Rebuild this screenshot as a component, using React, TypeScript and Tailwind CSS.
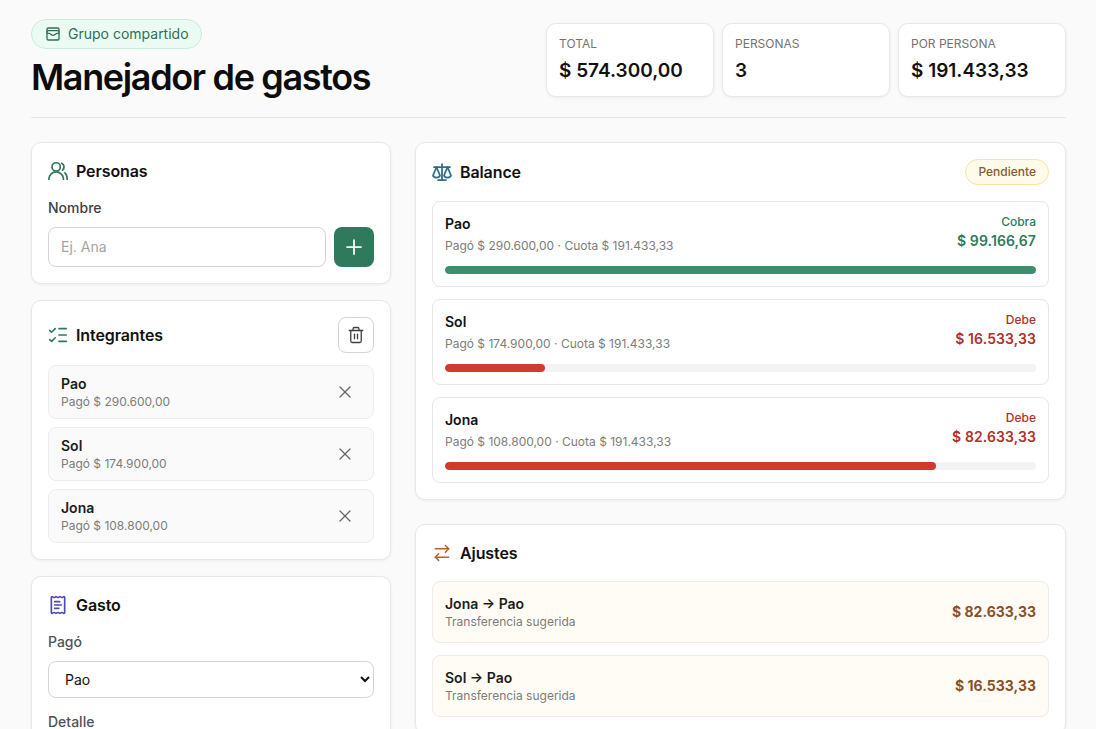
import { ArrowRightLeft, ListChecks, Plus, ReceiptText, Trash2, WalletCards, X } from 'lucide-react';
import type { ReactNode } from 'react';

const stats = [
  { label: 'Total', value: '$ 574.300,00' },
  { label: 'Personas', value: '3' },
  { label: 'Por persona', value: '$ 191.433,33' },
];

const members = [
  { name: 'Pao', paid: '$ 290.600,00' },
  { name: 'Sol', paid: '$ 174.900,00' },
  { name: 'Jona', paid: '$ 108.800,00' },
];

const balances = [
  { name: 'Pao', paid: '$ 290.600,00', status: 'Cobra', amount: '$ 99.166,67', percent: 100, positive: true },
  { name: 'Sol', paid: '$ 174.900,00', status: 'Debe', amount: '$ 16.533,33', percent: 16.9, positive: false },
  { name: 'Jona', paid: '$ 108.800,00', status: 'Debe', amount: '$ 82.633,33', percent: 83.1, positive: false },
];

const transfers = [
  { from: 'Jona', to: 'Pao', amount: '$ 82.633,33' },
  { from: 'Sol', to: 'Pao', amount: '$ 16.533,33' },
];

function PeopleIcon() {
  return (
    <svg viewBox="0 0 24 24" fill="none" stroke="currentColor" strokeWidth="1.9" strokeLinecap="round" strokeLinejoin="round" className="w-[22px] h-[22px] -mx-[1px] text-[#2f7a5c]">
      <circle cx="10" cy="7.5" r="4.5" />
      <path d="M2 21c0-4.4 3.6-8 8-8s8 3.6 8 8" />
      <path d="M16 3.5a4.5 4.5 0 0 1 1 7.5" />
      <path d="M19.5 14c1.6 1.4 2.5 4 2.5 7" />
    </svg>
  );
}

function ScalesIcon() {
  return (
    <svg viewBox="0 0 24 24" fill="none" stroke="currentColor" strokeWidth="1.75" strokeLinecap="round" strokeLinejoin="round" className="w-6 h-6 -mx-[2px] text-[#2c6e87]">
      <path d="M12 4v16" />
      <path d="M8 20h8" />
      <path d="M4 7h16" />
      <path d="M6.5 7 3 15.5c.5 1.5 2 2 3.5 2s3-.5 3.5-2z" />
      <path d="M17.5 7 14 15.5c.5 1.5 2 2 3.5 2s3-.5 3.5-2z" />
    </svg>
  );
}

function Card({ children }: { children: ReactNode }) {
  return (
    <section className="bg-white rounded-[10px] border border-[#e7e7e7] shadow-[0_1px_3px_rgba(0,0,0,0.06)] p-4">
      {children}
    </section>
  );
}

function CardTitle({ icon, title }: { icon: ReactNode; title: string }) {
  return (
    <div className="flex items-center gap-2">
      {icon}
      <h2 className="text-base font-semibold tracking-[-0.1px] text-[#111111]">{title}</h2>
    </div>
  );
}

export default function App() {
  return (
    <div className="h-screen overflow-hidden bg-[#fafafa] font-['Inter',sans-serif] text-[#111111]">
      <div className="pl-[31px] pr-[30px] pt-[19px]">
        {/* Header */}
        <header className="flex items-start justify-between border-b border-[#e5e5e5] h-[99px]">
          <div>
            <span className="inline-flex items-center gap-[7px] h-[30px] pl-[13px] pr-3 rounded-full border border-[#c5eeda] bg-[#ebfbf3] text-sm font-normal text-[#2f6f57]">
              <WalletCards className="w-4 h-4" strokeWidth={2} />
              Grupo compartido
            </span>
            <h1 className="mt-[6px] text-[36px] leading-[44px] font-semibold tracking-[-1.35px] text-[#0c0c0c]">Manejador de gastos</h1>
          </div>
          <div className="flex gap-2 mt-1">
            {stats.map((stat) => (
              <div key={stat.label} className="w-[168px] h-[74px] bg-white rounded-[10px] border border-[#e7e7e7] shadow-[0_1px_3px_rgba(0,0,0,0.06)] px-3 py-[11px]">
                <p className="text-xs leading-[18px] uppercase text-[#737373]">{stat.label}</p>
                <p className="mt-[5px] text-[19px] leading-[26px] font-semibold">{stat.value}</p>
              </div>
            ))}
          </div>
        </header>

        <div className="flex gap-6 mt-6">
          {/* Left column */}
          <div className="flex flex-col gap-4 w-[360px] shrink-0">
            <Card>
              <CardTitle icon={<PeopleIcon />} title="Personas" />
              <label className="block mt-[15px] text-sm leading-5 font-medium text-[#404040]">Nombre</label>
              <div className="flex gap-2 mt-[9px]">
                <input
                  placeholder="Ej. Ana"
                  className="flex-1 min-w-0 h-10 px-3 pb-[2px] rounded-lg border border-[#d4d4d4] bg-white text-sm placeholder:text-[#a3a3a3]"
                />
                <button className="flex items-center justify-center w-10 h-10 rounded-lg bg-[#2f7a5c] text-white">
                  <Plus className="w-6 h-6" strokeWidth={1.75} />
                </button>
              </div>
            </Card>

            <Card>
              <div className="flex items-center justify-between">
                <CardTitle icon={<ListChecks className="w-[22px] h-[22px] -mx-[1px] text-[#2f7a5c]" strokeWidth={1.75} />} title="Integrantes" />
                <button className="flex items-center justify-center w-9 h-9 rounded-lg border border-[#d4d4d4] bg-white text-[#404040]">
                  <Trash2 className="w-[18px] h-[18px]" strokeWidth={1.75} />
                </button>
              </div>
              <div className="flex flex-col gap-2 mt-3">
                {members.map((member) => (
                  <div key={member.name} className="flex items-center justify-between h-[54px] px-3 rounded-lg border border-[#ececec] bg-[#fafafa]">
                    <div>
                      <p className="text-sm leading-[18px] font-semibold text-[#1c1c1c]">{member.name}</p>
                      <p className="mt-[1px] text-xs leading-4 text-[#7c7c7c]">Pagó {member.paid}</p>
                    </div>
                    <X className="w-5 h-5 mr-[6px] text-[#666666]" strokeWidth={1.5} />
                  </div>
                ))}
              </div>
            </Card>

            <Card>
              <CardTitle icon={<ReceiptText className="w-5 h-5 text-[#4f46b8]" strokeWidth={2} />} title="Gasto" />
              <label className="block mt-[15px] text-sm leading-5 font-medium text-[#525252]">Pagó</label>
              <select className="block w-full h-[37px] mt-[9px] px-3 rounded-lg border border-[#d4d4d4] bg-white text-sm">
                <option>Pao</option>
              </select>
              <label className="block mt-[14px] text-sm leading-5 font-medium text-[#525252]">Detalle</label>
            </Card>
          </div>

          {/* Right column */}
          <div className="flex flex-col gap-6 flex-1 min-w-0">
            <Card>
              <div className="flex items-center justify-between h-[26px]">
                <CardTitle icon={<ScalesIcon />} title="Balance" />
                <span className="flex items-center h-[26px] px-3 rounded-full border border-[#f5e3a8] bg-[#fffbeb] text-xs font-medium text-[#8a5a2b]">Pendiente</span>
              </div>
              <div className="flex flex-col gap-3 mt-4">
                {balances.map((row) => (
                  <div key={row.name} className="h-[86px] px-3 pt-3 rounded-lg border border-[#e7e7e7] bg-white">
                    <div className="flex justify-between">
                      <div>
                        <p className="text-sm leading-5 font-semibold">{row.name}</p>
                        <p className="mt-[2px] text-xs leading-5 text-[#7c7c7c]">Pagó {row.paid} · Cuota $ 191.433,33</p>
                      </div>
                      <div className="text-right -mt-[1px]">
                        <p className={`text-xs leading-[17px] font-medium ${row.positive ? 'text-[#2f7a5c]' : 'text-[#b42f2a]'}`}>{row.status}</p>
                        <p className={`mt-[1px] text-sm leading-5 font-semibold tracking-[0.1px] ${row.positive ? 'text-[#2f7a5c]' : 'text-[#b42f2a]'}`}>{row.amount}</p>
                      </div>
                    </div>
                    <div className="h-2 mt-[10px] rounded-full bg-[#f3f3f3] overflow-hidden">
                      <div
                        className={`h-full rounded-full ${row.positive ? 'bg-[#3c9070]' : 'bg-[#d13a30]'}`}
                        style={{ width: `${row.percent}%` }}
                      />
                    </div>
                  </div>
                ))}
              </div>
            </Card>

            <Card>
              <CardTitle icon={<ArrowRightLeft className="w-5 h-5 text-[#b5602a]" strokeWidth={1.75} />} title="Ajustes" />
              <div className="flex flex-col gap-3 mt-4">
                {transfers.map((transfer) => (
                  <div key={transfer.from} className="flex items-center justify-between h-[62px] px-3 rounded-lg border border-[#ececec] bg-[#fffcf5]">
                    <div>
                      <p className="text-sm leading-[18px] font-semibold text-[#1c1c1c]">{transfer.from} → {transfer.to}</p>
                      <p className="mt-[1px] text-xs leading-4 text-[#7c7c7c]">Transferencia sugerida</p>
                    </div>
                    <p className="text-sm font-bold text-[#8a4f26]">{transfer.amount}</p>
                  </div>
                ))}
              </div>
            </Card>
          </div>
        </div>
      </div>
    </div>
  );
}
